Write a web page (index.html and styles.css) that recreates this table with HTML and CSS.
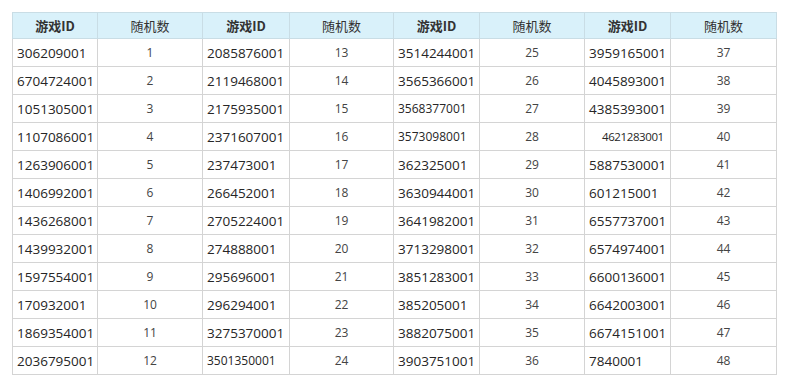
FILE: index.html
```html
<!DOCTYPE html>
<html>
<head>
<meta charset="utf-8">
<link rel="stylesheet" href="styles.css">
</head>
<body>
<div class="wrap">
<table class="grid">
<colgroup>
<col class="c-id1"><col class="c-n1"><col class="c-id2"><col class="c-n2"><col class="c-id3"><col class="c-n3"><col class="c-id4"><col class="c-n4">
</colgroup>
<thead>
<tr><th class="b">游戏ID</th><th>随机数</th><th class="b">游戏ID</th><th>随机数</th><th class="b">游戏ID</th><th>随机数</th><th class="b">游戏ID</th><th>随机数</th></tr>
</thead>
<tbody>
<tr><td>306209001</td><td class="n">1</td><td>2085876001</td><td class="n">13</td><td>3514244001</td><td class="n">25</td><td>3959165001</td><td class="n">37</td></tr>
<tr><td>6704724001</td><td class="n">2</td><td>2119468001</td><td class="n">14</td><td>3565366001</td><td class="n">26</td><td>4045893001</td><td class="n">38</td></tr>
<tr><td>1051305001</td><td class="n">3</td><td>2175935001</td><td class="n">15</td><td class="sm">3568377001</td><td class="n">27</td><td>4385393001</td><td class="n">39</td></tr>
<tr><td>1107086001</td><td class="n">4</td><td>2371607001</td><td class="n">16</td><td class="sm">3573098001</td><td class="n">28</td><td class="xs">4621283001</td><td class="n">40</td></tr>
<tr><td>1263906001</td><td class="n">5</td><td>237473001</td><td class="n">17</td><td>362325001</td><td class="n">29</td><td>5887530001</td><td class="n">41</td></tr>
<tr><td>1406992001</td><td class="n">6</td><td>266452001</td><td class="n">18</td><td>3630944001</td><td class="n">30</td><td>601215001</td><td class="n">42</td></tr>
<tr><td>1436268001</td><td class="n">7</td><td>2705224001</td><td class="n">19</td><td>3641982001</td><td class="n">31</td><td>6557737001</td><td class="n">43</td></tr>
<tr><td>1439932001</td><td class="n">8</td><td>274888001</td><td class="n">20</td><td>3713298001</td><td class="n">32</td><td>6574974001</td><td class="n">44</td></tr>
<tr><td>1597554001</td><td class="n">9</td><td>295696001</td><td class="n">21</td><td>3851283001</td><td class="n">33</td><td>6600136001</td><td class="n">45</td></tr>
<tr><td>170932001</td><td class="n">10</td><td>296294001</td><td class="n">22</td><td>385205001</td><td class="n">34</td><td>6642003001</td><td class="n">46</td></tr>
<tr><td>1869354001</td><td class="n">11</td><td>3275370001</td><td class="n">23</td><td>3882075001</td><td class="n">35</td><td>6674151001</td><td class="n">47</td></tr>
<tr><td>2036795001</td><td class="n">12</td><td class="sm">3501350001</td><td class="n">24</td><td>3903751001</td><td class="n">36</td><td>7840001</td><td class="n">48</td></tr>
</tbody>
</table>
</div>
</body>
</html>
```
FILE: styles.css
```css
html, body {
  margin: 0;
  padding: 0;
  background: #ffffff;
}
.wrap {
  padding: 12px 0 0 12px;
}
.grid {
  border-collapse: collapse;
  table-layout: fixed;
  width: 764px;
  font-family: "Open Sans", "Noto Sans CJK SC", sans-serif;
  font-size: 13.5px;
  color: #262626;
}
.c-id1 { width: 85px; }
.c-n1 { width: 105px; }
.c-id2 { width: 87px; }
.c-n2 { width: 104px; }
.c-id3 { width: 86px; }
.c-n3 { width: 105px; }
.c-id4 { width: 86px; }
.c-n4 { width: 106px; }
.grid th, .grid td {
  border: 1px solid #d4d4d4;
  padding: 0 4px;
  white-space: nowrap;
  overflow: hidden;
}
.grid th {
  background: #d9f1fa;
  height: 25px;
  font-family: "Noto Sans CJK SC", sans-serif;
  font-weight: normal;
  font-size: 13px;
  color: #333;
  text-align: center;
  border-color: #c9dde5;
}
.grid th.b {
  font-weight: bold;
}
.grid td {
  height: 27px;
  text-align: left;
}
.grid td.n {
  text-align: center;
  font-size: 12px;
  color: #444;
}
.grid td.sm {
  font-size: 12px;
}
.grid td.xs {
  font-size: 11.5px;
  padding-left: 17px;
  letter-spacing: -0.4px;
}
```
